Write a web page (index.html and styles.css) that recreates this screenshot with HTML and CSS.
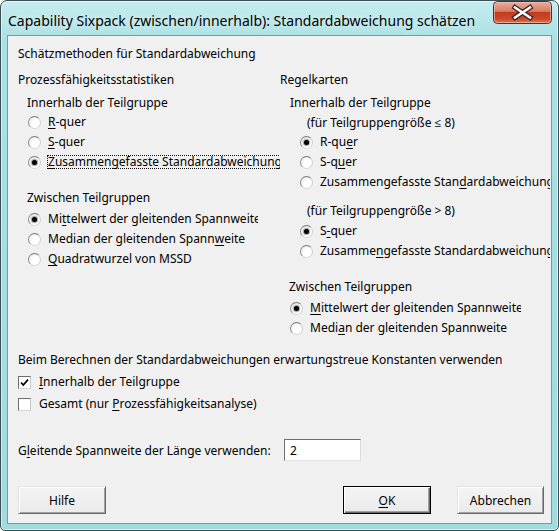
FILE: index.html
```html
<!DOCTYPE html>
<html lang="de">
<head>
    <meta charset="UTF-8">
    <title>Capability Sixpack (zwischen/innerhalb): Standardabweichung schätzen</title>
    <link rel="stylesheet" href="styles.css">
</head>
<body>
    <div class="window">
        <div class="titlebar">
            <span class="title">Capability Sixpack (zwischen/innerhalb): Standardabweichung schätzen</span>
            <button class="close-btn" aria-label="Schließen">
                <svg width="59" height="23" viewBox="0 0 59 23">
                    <defs>
                        <linearGradient id="closeFill" x1="0" y1="0" x2="0" y2="1">
                            <stop offset="0" stop-color="#eab0a2"/>
                            <stop offset="0.45" stop-color="#d97a62"/>
                            <stop offset="0.5" stop-color="#c33b1d"/>
                            <stop offset="0.8" stop-color="#c94a2a"/>
                            <stop offset="1" stop-color="#e5805c"/>
                        </linearGradient>
                    </defs>
                    <rect x="0.5" y="0.5" width="58" height="22" rx="4" fill="url(#closeFill)" stroke="#5a2a20"/>
                    <rect x="1.5" y="1.5" width="56" height="20" rx="3" fill="none" stroke="#f2c9bd" stroke-opacity="0.6"/>
                    <!-- the X: dark outline under a white stroke -->
                    <path d="M22 6.5 L37 16.5 M37 6.5 L22 16.5" stroke="#3b2420" stroke-width="5" stroke-linecap="square"/>
                    <path d="M22 6.5 L37 16.5 M37 6.5 L22 16.5" stroke="#fff" stroke-width="2.6" stroke-linecap="square"/>
                </svg>
            </button>
        </div>

        <div class="client">
            <div class="text heading">Schätzmethoden für Standardabweichung</div>

            <div class="columns">
                <!-- Prozessfähigkeitsstatistiken -->
                <div class="col col-left">
                    <div class="text">Prozessfähigkeitsstatistiken</div>
                    <div class="text sub">Innerhalb der Teilgruppe</div>
                    <div class="radios radios-within">
                        <label class="radio"><span class="dot"></span><span class="caption"><u>R</u>-quer</span></label>
                        <label class="radio"><span class="dot"></span><span class="caption"><u>S</u>-quer</span></label>
                        <label class="radio"><span class="dot on"></span><span class="caption focus"><u>Z</u>usammengefasste Standardabweichung</span></label>
                    </div>

                    <div class="text sub gap-group">Zwischen Teilgruppen</div>
                    <div class="radios radios-between">
                        <label class="radio"><span class="dot on"></span><span class="caption">Mi<u>t</u>telwert der gleitenden Spannweite</span></label>
                        <label class="radio"><span class="dot"></span><span class="caption">Median der gleitenden Spann<u>w</u>eite</span></label>
                        <label class="radio"><span class="dot"></span><span class="caption"><u>Q</u>uadratwurzel von MSSD</span></label>
                    </div>
                </div>

                <!-- Regelkarten -->
                <div class="col col-right">
                    <div class="text">Regelkarten</div>
                    <div class="text sub">Innerhalb der Teilgruppe</div>
                    <div class="text note">(für Teilgruppengröße ≤ 8)</div>
                    <div class="radios radios-small">
                        <label class="radio"><span class="dot on"></span><span class="caption">R-qu<u>e</u>r</span></label>
                        <label class="radio"><span class="dot"></span><span class="caption">S-q<u>u</u>er</span></label>
                        <label class="radio"><span class="dot"></span><span class="caption">Zusammengefasste Stan<u>d</u>ardabweichung</span></label>
                    </div>
                    <div class="text note note-large">(für Teilgruppengröße &gt; 8)</div>
                    <div class="radios radios-large">
                        <label class="radio"><span class="dot on"></span><span class="caption">S<u>-</u>quer</span></label>
                        <label class="radio"><span class="dot"></span><span class="caption">Zusamme<u>n</u>gefasste Standardabweichung</span></label>
                    </div>

                    <div class="text sub gap-group">Zwischen Teilgruppen</div>
                    <div class="radios radios-between-right">
                        <label class="radio"><span class="dot on"></span><span class="caption"><u>M</u>ittelwert der gleitenden Spannweite</span></label>
                        <label class="radio"><span class="dot"></span><span class="caption">Medi<u>a</u>n der gleitenden Spannweite</span></label>
                    </div>
                </div>
            </div>

            <div class="text unbiased">Beim Berechnen der Standardabweichungen erwartungstreue Konstanten verwenden</div>
            <div class="checks">
                <label class="check">
                    <span class="box">
                        <svg width="11" height="11" viewBox="0 0 11 11"><path d="M2 5.5 L4.3 8 L9 2.6" fill="none" stroke="#000" stroke-width="1.7"/></svg>
                    </span>
                    <span class="caption"><u>I</u>nnerhalb der Teilgruppe</span>
                </label>
                <label class="check">
                    <span class="box"></span>
                    <span class="caption">Gesamt (nur <u>P</u>rozessfähigkeitsanalyse)</span>
                </label>
            </div>

            <div class="span-row">
                <span class="span-label">G<u>l</u>eitende Spannweite der Länge verwenden:</span>
                <input class="span-input" type="text" value="2">
            </div>

            <div class="buttons">
                <button class="btn">Hilfe</button>
                <button class="btn btn-default"><u>O</u>K</button>
                <button class="btn btn-cancel">Abbrechen</button>
            </div>
        </div>
    </div>
</body>
</html>
```

FILE: styles.css
```css
body {
    margin: 0;
    font-family: "Noto Sans", "Open Sans", sans-serif;
    font-size: 12px;
    color: #000;
    background: #fff;
}

.window {
    width: 559px;
    height: 531px;
    box-sizing: border-box;
    border: 1px solid #3a4e55;
    border-radius: 7px 7px 5px 5px;
    background: linear-gradient(#c6ecef, #a9e0e4 40px, #a0dbe0);
    box-shadow: inset 0 0 0 1px rgba(255, 255, 255, 0.55);
    padding: 0 6px 6px;
    display: flex;
    flex-direction: column;
}

/* title bar */
.titlebar {
    height: 34px;
    display: flex;
    align-items: flex-start;
}
.title {
    margin: 10px 0 0 1px;
    font-size: 14px;
    line-height: 20px;
    text-shadow: 0 0 8px rgba(255, 255, 255, 0.9);
    white-space: nowrap;
}
.close-btn {
    margin: 0 0 0 auto;
    padding: 0;
    border: none;
    background: none;
    width: 59px;
    height: 23px;
    display: block;
}
.close-btn svg {
    display: block;
}

/* client area */
.client {
    flex: 1;
    border: 1px solid #7d99a0;
    background: #f0f0f0;
    padding: 10px 0 0 10px;
    overflow: hidden;
}
.text {
    line-height: 16px;
    height: 16px;
    white-space: nowrap;
}
u {
    text-underline-offset: 2px;
}

.columns {
    margin-top: 10px;
    display: grid;
    grid-template-columns: 262px 270px;
}
.col {
    overflow: hidden;
}
.sub {
    margin-top: 7px;
    padding-left: 9px;
}
.col-right .sub {
    padding-left: 10px;
}
.col-right .gap-group {
    padding-left: 9px;
}
.gap-group {
    margin-top: 18px;
}
.note {
    margin-top: 4px;
    padding-left: 27px;
}
.note-large {
    margin-top: 11px;
}

/* radio buttons */
.radios {
    margin-top: 1px;
    padding-left: 10px;
    overflow: hidden;
}
.radios-between {
    margin-top: 3px;
    width: 230px;
}
.radios-small {
    padding-left: 20px;
}
.radios-large {
    margin-top: 2px;
    padding-left: 20px;
}
.radios-between-right {
    margin-top: 3px;
    width: 231px;
}
.radio {
    height: 20px;
    display: flex;
    align-items: center;
    white-space: nowrap;
}
.dot {
    flex: none;
    width: 13px;
    height: 13px;
    box-sizing: border-box;
    border-radius: 50%;
    border: 1px solid;
    border-color: #7a7a7a #cfcfcf #d8d8d8 #8a8a8a;
    background: radial-gradient(circle at 60% 60%, #fff 35%, #e4e4e4 95%);
    margin-right: 7px;
    position: relative;
}
.dot.on::after {
    content: "";
    position: absolute;
    left: 3px;
    top: 3px;
    width: 5px;
    height: 5px;
    border-radius: 50%;
    background: #000;
    box-shadow: 0 0 1px 1px rgba(60, 60, 60, 0.5);
}
.caption {
    line-height: 14px;
}
.focus {
    border: 1px dotted #111;
    margin-left: -1px;
    line-height: 12px;
}

/* bias correction checkboxes */
.unbiased {
    margin-top: 14px;
}
.checks {
    margin-top: 3px;
}
.check {
    height: 22px;
    display: flex;
    align-items: center;
    white-space: nowrap;
}
.box {
    flex: none;
    width: 13px;
    height: 13px;
    box-sizing: border-box;
    border: 1px solid;
    border-color: #6d6d6d #c9c9c9 #d6d6d6 #6d6d6d;
    background: #fff;
    margin-right: 8px;
    display: flex;
    align-items: center;
    justify-content: center;
}
.box svg {
    display: block;
}

/* moving range length */
.span-row {
    margin-top: 24px;
    height: 22px;
    display: flex;
    align-items: center;
}
.span-label {
    width: 266px;
    white-space: nowrap;
}
.span-input {
    width: 77px;
    height: 22px;
    box-sizing: border-box;
    border: 1px solid;
    border-color: #6e6e6e #dcdcdc #e3e3e3 #6e6e6e;
    background: #fff;
    padding: 0 5px;
    font: inherit;
    color: #000;
}

/* dialog buttons */
.buttons {
    margin-top: 25px;
    padding-right: 7px;
    display: flex;
}
.btn {
    width: 88px;
    height: 28px;
    box-sizing: border-box;
    font: inherit;
    color: #000;
    background: linear-gradient(#f4f4f4, #eaeaea);
    border: 1px solid;
    border-color: #e3e3e3 #696969 #696969 #e3e3e3;
    box-shadow: inset 1px 1px #fff, inset -1px -1px #a0a0a0;
    padding: 0;
}
.btn-default {
    margin-left: auto;
    border: 1px solid #000;
    box-shadow: inset 1px 1px #fff, inset -1px -1px #696969, inset -2px -2px #a0a0a0;
}
.btn-cancel {
    margin-left: 26px;
    width: 87px;
}
```
